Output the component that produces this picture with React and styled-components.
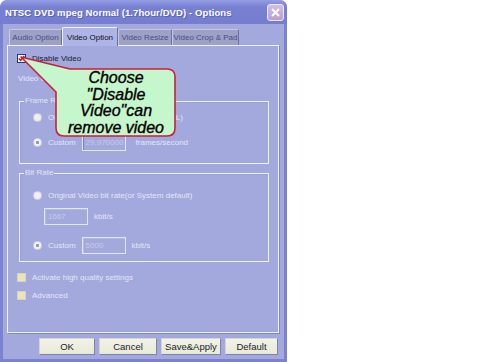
import React from "react";
import styled, { createGlobalStyle } from "styled-components";

const GlobalStyle = createGlobalStyle`
  html, body { margin:0; padding:0; background:#fff; }
  body { font-family:"Liberation Sans", Arial, sans-serif; }
`;

const Stage = styled.div`
  width:490px;
  height:362px;
  overflow:hidden;
  background:#fff;
`;

const Window = styled.div`
  position:relative;
  width:287px;
  height:362px;
  display:flex;
  flex-direction:column;
  background:#a3a9dd;
  border-radius:7px 7px 0 0;
  overflow:hidden;
`;

const TitleBar = styled.div`
  height:24px;
  flex:none;
  display:flex;
  align-items:center;
  justify-content:space-between;
  padding:0 3px 0 5px;
  background:linear-gradient(#959de4, #7780d2 30%, #747dcf);
  color:#fff;
  font-size:9.5px;
  font-weight:bold;
  letter-spacing:0.1px;
  text-shadow:1px 1px 0 #5a62b0;
`;

const CloseButton = styled.div`
  width:15px;
  height:15px;
  border:1px solid #f0eaf8;
  border-radius:3px;
  background:linear-gradient(#d4bde4, #b8a0d2);
  display:flex;
  align-items:center;
  justify-content:center;
`;

const Body = styled.div`
  flex:1;
  display:flex;
  flex-direction:column;
  border:3px solid #7a83d2;
  border-top:none;
  padding:2px 5px 0 4px;
`;

const TabStrip = styled.div`
  display:flex;
  align-items:flex-end;
  height:19px;
  padding-left:2px;
`;

const Tab = styled.div`
  position:relative;
  width:${p => p.w}px;
  height:${p => (p.active ? 19 : 16)}px;
  margin-bottom:${p => (p.active ? -1 : 0)}px;
  z-index:${p => (p.active ? 2 : 1)};
  box-sizing:border-box;
  display:flex;
  align-items:center;
  justify-content:center;
  white-space:nowrap;
  overflow:hidden;
  font-size:8px;
  color:${p => (p.active ? "#101018" : "#4c4f78")};
  background:${p => (p.active ? "#aeb4e6" : "#9da1c7")};
  border:1px solid ${p => (p.active ? "#eef0fb" : "#c6c9e6")};
  border-bottom:none;
  border-right-color:#6e7299;
  border-radius:2px 2px 0 0;
`;

const Panel = styled.div`
  height:288px;
  box-sizing:border-box;
  display:flex;
  flex-direction:column;
  border:1px solid #f0f2fb;
  box-shadow:1px 1px 0 #7f87c4;
  padding:6px 9px 0 11px;
`;

const Row = styled.div`
  display:flex;
  align-items:center;
  height:${p => p.h || 12}px;
  margin-top:${p => p.mt || 0}px;
  margin-left:${p => p.ml || 0}px;
  gap:${p => p.gap || 6}px;
  font-size:8px;
  color:${p => (p.enabled ? "#1a1a2a" : "#e3e6f6")};
  white-space:nowrap;
`;

const Check = styled.span`
  width:9px;
  height:9px;
  flex:none;
  box-sizing:border-box;
  display:flex;
  align-items:center;
  justify-content:center;
  border:1px solid ${p => (p.enabled ? "#2a3a78" : "#d9d4b4")};
  background:${p => (p.enabled ? "#f6f6f6" : "#ebe3c0")};
`;

const Radio = styled.span`
  width:9px;
  height:9px;
  flex:none;
  box-sizing:border-box;
  border-radius:50%;
  border:1px solid #d6d8ea;
  background:radial-gradient(circle, ${p => (p.checked ? "#9a9cae 0 1.6px, #f4f4f4 2px" : "#f4f4f4 0, #ecebe4 4px")});
`;

const Group = styled.fieldset`
  margin:${p => p.mt || 0}px 0 0 0;
  padding:0;
  border:1px solid #eef0fb;
  box-shadow:inset 1px 1px 0 #9aa0d4;
  height:${p => p.h}px;
  box-sizing:border-box;
  min-width:0;
`;

const Legend = styled.legend`
  font-size:8px;
  line-height:10px;
  color:#e3e6f6;
  padding:0 1px;
  margin-left:4px;
`;

const Field = styled.span`
  width:${p => p.w || 44}px;
  height:17px;
  flex:none;
  box-sizing:border-box;
  display:flex;
  align-items:center;
  padding-left:3px;
  border:1px solid #e2e5f5;
  box-shadow:inset 1px 1px 0 ${p => (p.dark ? "#7c82b4" : "#b4b9e2")};
  color:#c7cbe8;
  font-size:8px;
  overflow:hidden;
`;

const ButtonRow = styled.div`
  display:flex;
  justify-content:flex-end;
  gap:4px;
  margin-top:5px;
  padding-right:1px;
`;

const Button = styled.div`
  width:${p => p.w}px;
  height:17px;
  box-sizing:border-box;
  display:flex;
  align-items:center;
  justify-content:center;
  font-size:9.5px;
  color:#1c1c2c;
  background:linear-gradient(#f2f3e6, #e8e9d6);
  border:1px solid #d2d4e2;
  border-right-color:#7c82aa;
  border-bottom-color:#7c82aa;
`;

const CalloutShape = styled.svg`
  position:absolute;
  left:0;
  top:0;
  pointer-events:none;
`;

const CalloutText = styled.div`
  position:absolute;
  left:56px;
  top:69px;
  width:120px;
  height:68px;
  display:flex;
  align-items:center;
  justify-content:center;
  text-align:center;
  font-size:16px;
  line-height:16.5px;
  font-style:italic;
  color:#000;
  -webkit-text-stroke:0.35px #000;
`;

function CheckMark() {
  return (
    <svg width="7" height="7" viewBox="0 0 7 7">
      <path d="M0.8 3.4 L2.7 5.4 L6.3 1" fill="none" stroke="#b02038" strokeWidth="1.5" />
    </svg>
  );
}

export default function App() {
  return (
    <Stage>
      <GlobalStyle />
      <Window>
        <TitleBar>
          <span>NTSC DVD mpeg Normal (1.7hour/DVD) - Options</span>
          <CloseButton>
            <svg width="9" height="9" viewBox="0 0 9 9">
              <path d="M1 1 L8 8 M8 1 L1 8" stroke="#fff" strokeWidth="2" />
            </svg>
          </CloseButton>
        </TitleBar>
        <Body>
          <TabStrip>
            <Tab w={53}>Audio Option</Tab>
            <Tab w={56} active>Video Option</Tab>
            <Tab w={54}>Video Resize</Tab>
            <Tab w={67}>Video Crop &amp; Pad</Tab>
          </TabStrip>
          <Panel>
            <Row enabled gap={6} ml={-2}>
              <Check enabled><CheckMark /></Check>
              <span>Disable Video</span>
            </Row>
            <Row mt={8} ml={-1}>Video Codec:</Row>
            <Group h={68} mt={12}>
              <Legend>Frame Rate</Legend>
              <Row h={17} mt={3} ml={13}>
                <Radio />
                <span>Original Video frame rate (NTSC/PAL)</span>
              </Row>
              <Row h={17} mt={8} ml={13}>
                <Radio checked />
                <span>Custom</span>
                <Field dark>29.970000</Field>
                <span style={{ marginLeft: 4 }}>frames/second</span>
              </Row>
            </Group>
            <Group h={94} mt={4}>
              <Legend>Bit Rate</Legend>
              <Row h={17} mt={9} ml={13}>
                <Radio />
                <span>Original Video bit rate(or System default)</span>
              </Row>
              <Row h={17} mt={4} ml={24}>
                <Field>1667</Field>
                <span>kbit/s</span>
              </Row>
              <Row h={17} mt={12} ml={13}>
                <Radio checked />
                <span>Custom</span>
                <Field>5000</Field>
                <span>kbit/s</span>
              </Row>
            </Group>
            <Row mt={9} ml={-2}>
              <Check />
              <span>Activate high quality settings</span>
            </Row>
            <Row mt={6} ml={-2}>
              <Check />
              <span>Advanced</span>
            </Row>
          </Panel>
          <ButtonRow>
            <Button w={56}>OK</Button>
            <Button w={58}>Cancel</Button>
            <Button w={60}>Save&amp;Apply</Button>
            <Button w={53}>Default</Button>
          </ButtonRow>
        </Body>
        <CalloutShape width="287" height="362">
          <path
            d="M70 69 L167 69 Q175 69 175 77 L175 128 Q175 136 167 136 L64 136 Q56 136 56 128 L56 92 L21 57 Z"
            fill="#c6f6cc"
            stroke="#cc1f3a"
            strokeWidth="1.6"
            strokeLinejoin="round"
          />
        </CalloutShape>
        <CalloutText>
          Choose<br />"Disable<br />Video"can<br />remove video
        </CalloutText>
      </Window>
    </Stage>
  );
}
